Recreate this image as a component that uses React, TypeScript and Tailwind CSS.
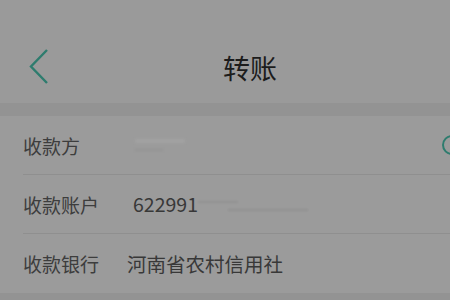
import React from "react";

const font = { fontFamily: '"Noto Sans CJK SC", "Noto Sans", sans-serif' };

function Row({ label, children, last }: { label: string; children?: React.ReactNode; last?: boolean }) {
  return (
    <div className="pl-[23px]">
      <div className={`flex items-center h-[59px] ${last ? "" : "border-b border-[#8f8f8f]"}`}>
        <span className="shrink-0 text-[19px] text-[#3d3d3d] leading-none">{label}</span>
        {children}
      </div>
    </div>
  );
}

export default function App() {
  return (
    <div className="w-[450px] h-[300px] overflow-hidden bg-[#9b9b9b]" style={font}>
      <div className="h-[103px] bg-[#9a9a9a] flex items-end pb-[16px]">
        <div className="h-[40px] w-full flex items-center">
          <svg width="60" height="40" viewBox="0 0 60 40" className="shrink-0">
            <path d="M47 3 L31 19.5 L47 36" fill="none" stroke="#2e7c6e" strokeWidth="2.4" />
          </svg>
          <div className="flex-1 text-center text-[27px] text-[#1c1c1c] pr-[10px] leading-none">转账</div>
        </div>
      </div>
      <div className="h-[13px] bg-[#939393]" />
      <div className="bg-[#9b9b9b]">
        <Row label="收款方">
          <div className="flex flex-col gap-[6px] ml-[55px] opacity-60 blur-[1px]">
            <div className="w-[50px] h-[4px] bg-[#a6a6a6]" />
            <div className="w-[28px] h-[2px] bg-[#8e8e8e]" />
          </div>
          <div className="ml-auto -mr-[12px] w-[20px] h-[20px] rounded-full border-2 border-[#2e7c6e]" />
        </Row>
        <Row label="收款账户">
          <span className="ml-[34px] text-[19.5px] text-[#383838] leading-none">622991</span>
          <div className="flex flex-col gap-[6px] mt-[4px] blur-[1px] opacity-70">
            <div className="w-[40px] h-[2px] bg-[#8f8f8f]" />
            <div className="w-[80px] h-[2px] bg-[#8c8c8c] ml-[30px]" />
          </div>
        </Row>
        <Row label="收款银行" last>
          <span className="ml-[28px] text-[19.5px] text-[#383838] leading-none">河南省农村信用社</span>
        </Row>
      </div>
      <div className="h-[20px] bg-[#939393]" />
    </div>
  );
}
